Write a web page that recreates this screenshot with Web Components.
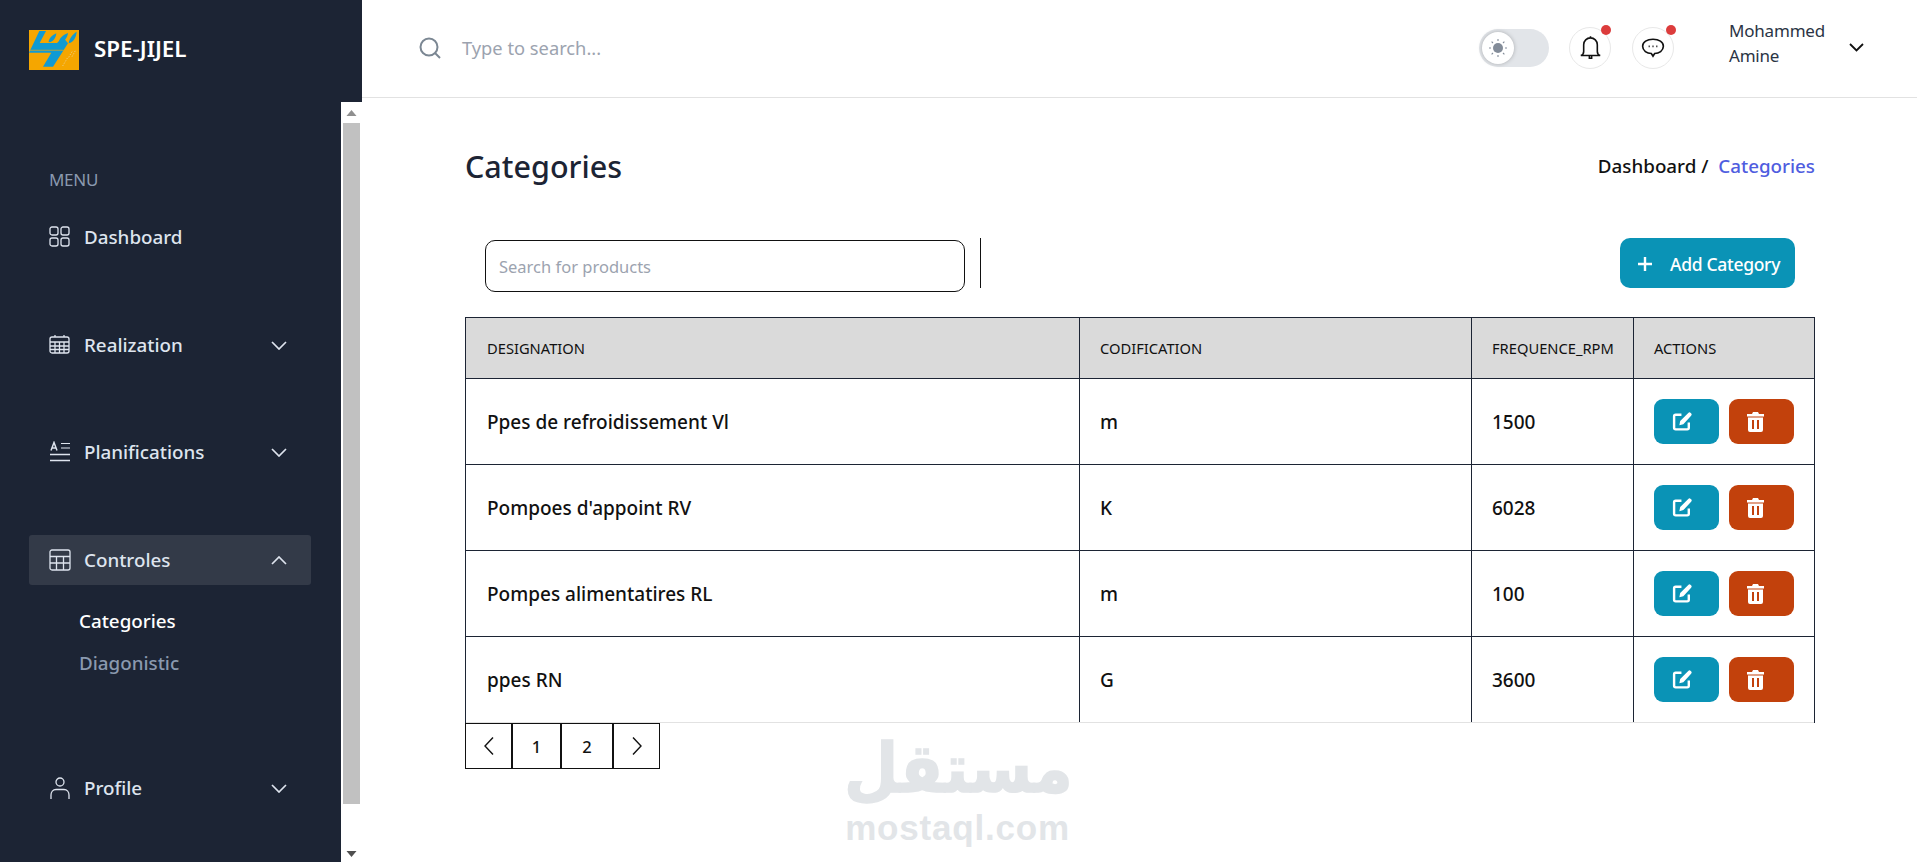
<!DOCTYPE html>
<html>
<head>
<meta charset="utf-8">
<title>SPE-JIJEL</title>
<style>
  html, body { margin: 0; height: 100%; }
  body { font-family: "Noto Sans", "Open Sans", sans-serif; overflow: hidden; background: #fff; }
</style>
</head>
<body>
<spe-app>
  <spe-sidebar slot="side">
    <nav-label>MENU</nav-label>
    <nav-item icon="grid" top="20">Dashboard</nav-item>
    <nav-item icon="calendar" chevron="down" top="58">Realization</nav-item>
    <nav-item icon="plan" chevron="down" top="57">Planifications</nav-item>
    <nav-item icon="table" chevron="up" top="58" active>Controles</nav-item>
    <nav-sub top="24" current>Categories</nav-sub>
    <nav-sub top="17">Diagonistic</nav-sub>
    <nav-item icon="user" chevron="down" top="87">Profile</nav-item>
  </spe-sidebar>
  <spe-header slot="top"></spe-header>
  <page-head title="Categories"></page-head>
  <table-tools></table-tools>
  <data-table>
    <data-row head a="DESIGNATION" b="CODIFICATION" c="FREQUENCE_RPM" d="ACTIONS"></data-row>
    <data-row a="Ppes de refroidissement Vl" b="m" c="1500"></data-row>
    <data-row a="Pompoes d'appoint RV" b="K" c="6028"></data-row>
    <data-row a="Pompes alimentatires RL" b="m" c="100"></data-row>
    <data-row last a="ppes RN" b="G" c="3600"></data-row>
  </data-table>
  <page-nav></page-nav>
  <water-mark></water-mark>
</spe-app>

<script>
  const ICONS = {
    grid: '<rect x="1" y="1" width="8" height="8" rx="2"/><rect x="12" y="1" width="8" height="8" rx="2"/><rect x="1" y="12" width="8" height="8" rx="2"/><rect x="12" y="12" width="8" height="8" rx="2"/>',
    calendar: '<rect x="1" y="3" width="19" height="16" rx="2"/><path d="M1 8h19M1 12h19M1 15.500h19M6 1v2M15 1v2M6 8v11M10.500 8v11M15 8v11"/>',
    plan: '<path d="M1 13.500h20M1 19.500h20" stroke-width="1.600"/><path d="M12 2.500h9M12 7h9" stroke-width="1.200"/><path d="M2 9.500l3-8 3 8M3.200 7h3.600" stroke-width="1.500"/>',
    table: '<rect x="1" y="1" width="20" height="20" rx="2"/><path d="M1 7.500h20M1 14h20M7.500 7.500V21M14.500 7.500V21"/>',
    user: '<circle cx="11" cy="5" r="4"/><path d="M2 22v-4c0-3 2-5.500 5-5.500h8c3 0 5 2.500 5 5.500v4"/>'
  };

  class BaseEl extends HTMLElement {
    constructor(){
      super();
      this.attachShadow({mode: 'open'});
    }
    render(html){
      this.shadowRoot.innerHTML = html;
    }
  }

  class SpeApp extends BaseEl {
    connectedCallback(){
      this.render(`<style>
        :host{display:grid;grid-template-columns:362px 1fr;height:862px;overflow:hidden;position:relative;}
        .main{display:flex;flex-direction:column;min-width:0;}
        .content{display:flex;flex-direction:column;padding:0 102px 0 103px;}
      </style>
      <slot name="side"></slot>
      <div class="main">
        <slot name="top"></slot>
        <div class="content"><slot></slot></div>
      </div>`);
    }
  }

  class SpeSidebar extends BaseEl {
    connectedCallback(){
      this.render(`<style>
        :host{display:flex;flex-direction:column;height:862px;background:#1c2434;}
        .brand{height:102px;flex:none;display:flex;align-items:flex-start;padding:30px 0 0 29px;box-sizing:border-box;gap:15px;}
        .brand svg{width:50px;height:40px;display:block;}
        .brand span{font-size:22.400px;font-weight:600;color:#fff;line-height:38px;}
        .body{flex:1;display:flex;min-height:0;}
        nav{flex:1;padding:66px 30px 0 29px;display:flex;flex-direction:column;}
        .bar{width:21px;background:#fff;flex:none;display:flex;flex-direction:column;box-sizing:border-box;padding-right:2px;padding-left:2px;}
        .arrow{height:21px;display:flex;align-items:center;justify-content:center;flex:none;}
        .thumb{flex:1;background:#c1c1c1;margin-bottom:0;}
        .arrow.down{height:58px;align-items:flex-end;padding-bottom:5px;box-sizing:border-box;}
      </style>
      <div class="brand">
        <svg viewBox="87 90 150 120"><rect x="87" y="90" width="150" height="120" fill="#f5a600"/>
          <path fill="#109ad3" d="M118 93h20l-19 36h52l18-17 15 18-45 70h-30l25-42H87z"/>
          <path fill="#109ad3" d="M146 127c0-13 12-22 23-27-1 11-7 26-23 27zM176 128c1-14 15-24 28-29-1 12-10 29-28 29zM206 130c2-15 12-27 24-35-1 14-8 32-24 35z"/>
          <path fill="#f5a600" d="M88 149h103v3H88z" opacity=".7"/>
          <path fill="none" stroke="#e8d9b0" stroke-width="2" stroke-dasharray="4 4" d="M188 198l16-27M206 172l12-20M216 170l10-18"/>
        </svg>
        <span>SPE-JIJEL</span>
      </div>
      <div class="body">
        <nav><slot></slot></nav>
        <div class="bar">
          <div class="arrow"><svg width="11" height="6" viewBox="0 0 11 6"><path d="M5.500 0l5 6H.5z" fill="#8f8f8f"/></svg></div>
          <div class="thumb"></div>
          <div class="arrow down"><svg width="11" height="6" viewBox="0 0 11 6"><path d="M.5 0h10l-5 6z" fill="#4f4f4f"/></svg></div>
        </div>
      </div>`);
    }
  }

  class NavLabel extends BaseEl {
    connectedCallback(){
      this.render(`<style>
        :host{display:block;font-size:17px;line-height:24px;color:#8a99af;padding-left:20px;letter-spacing:-.3px;}
      </style><slot></slot>`);
    }
  }

  class NavItem extends BaseEl {
    connectedCallback(){
      const chev = this.getAttribute('chevron');
      const path = chev === 'up' ? 'M1 8l7-7 7 7' : 'M1 1l7 7 7-7';
      this.render(`<style>
        :host{display:flex;height:50px;align-items:center;margin-top:${this.getAttribute('top')||0}px;border-radius:3px;padding:0 24px 0 20px;color:#dee4ee;font-size:18.800px;font-weight:500;flex:none;}
        :host([active]){background:#333a48;}
        .ic{width:22px;height:22px;fill:none;stroke:currentColor;stroke-width:1.300;flex:none;margin-right:13px;}
        .txt{flex:1;}
        .ch{width:16px;height:9px;fill:none;stroke:currentColor;stroke-width:1.700;}
      </style>
      <svg class="ic" viewBox="0 0 22 22">${ICONS[this.getAttribute('icon')]||''}</svg>
      <span class="txt"><slot></slot></span>
      ${chev ? `<svg class="ch" viewBox="0 0 16 9"><path d="${path}"/></svg>` : ''}`);
    }
  }

  class NavSub extends BaseEl {
    connectedCallback(){
      this.render(`<style>
        :host{display:block;margin-top:${this.getAttribute('top')||0}px;padding-left:50px;font-size:18.800px;font-weight:500;line-height:25px;color:#8a99af;}
        :host([current]){color:#fff;}
      </style><slot></slot>`);
    }
  }

  class SpeHeader extends BaseEl {
    connectedCallback(){
      this.render(`<style>
        :host{display:flex;height:98px;box-sizing:border-box;border-bottom:1px solid #e2e2e2;align-items:center;padding:0 0 2px 57px;flex:none;}
        .find{width:22px;height:22px;fill:none;stroke:#7b8793;stroke-width:2;margin-right:21px;flex:none;}
        .ph{font-size:18.300px;color:#9ca3af;flex:1;}
        .toggle{width:70px;height:38px;border-radius:19px;background:#e2e5e9;margin-right:20px;display:flex;align-items:center;padding-left:3px;box-sizing:border-box;flex:none;}
        .knob{width:32px;height:32px;border-radius:50%;background:#fff;box-shadow:0 0 4px rgba(0,0,0,.25);display:flex;align-items:center;justify-content:center;}
        .round{width:42px;height:42px;border-radius:50%;border:1px solid #e8e8e8;box-sizing:border-box;position:relative;display:flex;align-items:center;justify-content:center;margin-right:21px;flex:none;}
        .dot{position:absolute;width:10px;height:10px;border-radius:50%;background:#dc3c3c;top:-3px;right:-1px;}
        .name{width:113px;margin-left:55px;margin-bottom:9px;font-size:17px;line-height:25px;color:#2b3445;letter-spacing:-.2px;flex:none;}
        .cv{width:15px;height:9px;fill:none;stroke:#111;stroke-width:1.800;margin-left:7px;margin-right:53px;flex:none;}
      </style>
      <svg class="find" viewBox="0 0 22 22"><circle cx="10" cy="10" r="8.500"/><path d="M16 16l5 5"/></svg>
      <span class="ph">Type to search...</span>
      <div class="toggle"><div class="knob">
        <svg width="20" height="20" viewBox="0 0 20 20"><circle cx="10" cy="10" r="5" fill="#838c99"/><path d="M10 1v2M10 17v2M1 10h2M17 10h2M3.600 3.600l1.400 1.400M15 15l1.400 1.400M3.600 16.400L5 15M15 5l1.400-1.400" stroke="#838c99" stroke-width="1.100"/></svg>
      </div></div>
      <div class="round"><svg width="23" height="25" viewBox="0 0 20 22" fill="none" stroke="#111" stroke-width="1.400"><path d="M10 1v1.500M4 8.500a6 6 0 0 1 12 0v6c0 2 1 3 2.500 3.500h-17C3 17.500 4 16.500 4 14.500zM9 18.500v2h2v-2"/></svg><i class="dot"></i></div>
      <div class="round" style="margin-right:0"><svg width="24" height="22" viewBox="0 0 22 20" fill="none" stroke="#111" stroke-width="1.500"><path d="M11 2c5.500 0 9.500 2.500 9.500 6.500S16.500 15 12.500 15L11 17.500 9.500 15c-4 0-8-2.500-8-6.500S5.500 2 11 2z"/><path d="M7 8.500h1M10.500 8.500h1M14 8.500h1" stroke-width="1.600"/></svg><i class="dot" style="right:-3px"></i></div>
      <div class="name">Mohammed Amine</div>
      <svg class="cv" viewBox="0 0 15 9"><path d="M1 1l6.500 6.500L14 1"/></svg>`);
    }
  }

  class PageHead extends BaseEl {
    connectedCallback(){
      this.render(`<style>
        :host{display:flex;justify-content:space-between;align-items:center;height:140px;box-sizing:border-box;padding-bottom:4px;flex:none;}
        h2{margin:0;font-size:30.500px;font-weight:500;color:#1c2434;}
        .crumb{font-size:18.800px;font-weight:500;color:#111;}
        .crumb b{font-weight:500;color:#4f5de0;margin-left:5px;}
      </style>
      <h2>${this.getAttribute('title')}</h2>
      <div class="crumb">Dashboard / <b>Categories</b></div>`);
    }
  }

  class TableTools extends BaseEl {
    connectedCallback(){
      this.render(`<style>
        :host{display:flex;align-items:flex-start;height:79px;padding:0 20px;flex:none;}
        .box{width:480px;height:52px;margin-top:2px;box-sizing:border-box;border:1.500px solid #111;border-radius:10px;padding-left:13px;display:flex;align-items:center;font-size:16.500px;color:#9ca3af;}
        .sep{width:1px;height:50px;background:#111;margin-left:15px;}
        .add{margin-left:auto;width:175px;height:50px;background:#0a93b6;border-radius:10px;color:#fff;display:flex;align-items:center;padding:1px 0 0 17px;box-sizing:border-box;font-size:17.500px;font-weight:500;letter-spacing:-.3px;}
        .add svg{width:16px;height:16px;margin-right:17px;}
      </style>
      <div class="box">Search for products</div>
      <div class="sep"></div>
      <div class="add"><svg viewBox="0 0 16 16"><path d="M8 1v14M1 8h14" stroke="#fff" stroke-width="2.400"/></svg>Add Category</div>`);
    }
  }

  class DataTable extends BaseEl {
    connectedCallback(){
      this.render(`<style>
        :host{display:block;border:solid #1c2434;border-width:1px 1px 0;flex:none;}
      </style><slot></slot>`);
    }
  }

  class DataRow extends BaseEl {
    connectedCallback(){
      const head = this.hasAttribute('head');
      const a = n => this.getAttribute(n) || '';
      const actions = `<span class="btn" style="background:#0a93b6"><svg width="21" height="21" viewBox="0 0 20 20"><path d="M9 3.500H3.500a1.500 1.500 0 0 0-1.500 1.500v11a1.500 1.500 0 0 0 1.500 1.500h11a1.500 1.500 0 0 0 1.500-1.500V11" fill="none" stroke="#fff" stroke-width="2.300"/><path d="M7 13.500l.8-4L15.500 1.800a1.600 1.600 0 0 1 2.300 0l.4.4a1.600 1.600 0 0 1 0 2.300L10.800 12.500z" fill="#fff"/></svg></span>
        <span class="btn" style="background:#c2410c"><svg width="17" height="20" viewBox="0 0 17 20"><path fill="#fff" fill-rule="evenodd" d="M6 0h5l1 2h5v2.500H0V2h5zM1 5.500h15V18a2 2 0 0 1-2 2H3a2 2 0 0 1-2-2zM5 8v9h2V8zM10 8v9h2V8z"/></svg></span>`;
      this.render(`<style>
        :host{display:grid;grid-template-columns:613px 392px 162px 1fr;height:${head ? 60 : 85}px;border-bottom:1px solid ${this.hasAttribute('last') ? '#e2e2e2' : '#1c2434'};}
        :host([head]){background:#dadada;}
        .c{display:flex;align-items:center;padding-left:21px;color:#111;font-size:19px;font-weight:500;box-sizing:border-box;}
        .c:first-child{padding-left:20px;}
        :host([head]) .c{font-size:14.700px;font-weight:400;}
        .c + .c{border-left:1px solid #1c2434;padding-left:20px;}
        .btn{width:65px;height:45px;border-radius:9px;display:flex;align-items:center;padding-left:18px;box-sizing:border-box;margin-right:10px;flex:none;}
      </style>
      <div class="c">${a('a')}</div><div class="c">${a('b')}</div><div class="c">${a('c')}</div>
      <div class="c">${head ? a('d') : actions}</div>`);
    }
  }

  class PageNav extends BaseEl {
    connectedCallback(){
      this.render(`<style>
        :host{display:flex;flex:none;}
        .p{height:46px;box-sizing:border-box;border:1px solid #111;display:flex;align-items:center;justify-content:center;font-size:16.500px;font-weight:500;color:#111;background:#fff;}
        svg{width:12px;height:20px;fill:none;stroke:#111;stroke-width:1.400;}
      </style>
      <div class="p" style="width:47px"><svg viewBox="0 0 12 20"><path d="M10 1.500L2 10l8 8.500"/></svg></div>
      <div class="p" style="width:49px">1</div>
      <div class="p" style="width:52px">2</div>
      <div class="p" style="width:47px"><svg viewBox="0 0 12 20"><path d="M2 1.500L10 10l-8 8.500"/></svg></div>`);
    }
  }

  class WaterMark extends BaseEl {
    connectedCallback(){
      this.render(`<style>
        :host{position:absolute;left:845px;top:729px;width:225px;text-align:center;color:#e2e5e8;pointer-events:none;}
        .ar{font-family:"DejaVu Sans",sans-serif;font-weight:700;font-size:68px;line-height:79px;height:79px;transform:translateX(-10px) scaleX(.92);white-space:nowrap;-webkit-text-stroke:1.500px #e2e5e8;}
        .la{font-family:"Liberation Sans",sans-serif;font-weight:700;font-size:35px;letter-spacing:.8px;line-height:40px;white-space:nowrap;}
      </style>
      <div class="ar">مستقل</div><div class="la">mostaql.com</div>`);
    }
  }

  customElements.define('spe-app', SpeApp);
  customElements.define('spe-sidebar', SpeSidebar);
  customElements.define('nav-label', NavLabel);
  customElements.define('nav-item', NavItem);
  customElements.define('nav-sub', NavSub);
  customElements.define('spe-header', SpeHeader);
  customElements.define('page-head', PageHead);
  customElements.define('table-tools', TableTools);
  customElements.define('data-table', DataTable);
  customElements.define('data-row', DataRow);
  customElements.define('page-nav', PageNav);
  customElements.define('water-mark', WaterMark);
</script>
</body>
</html>
